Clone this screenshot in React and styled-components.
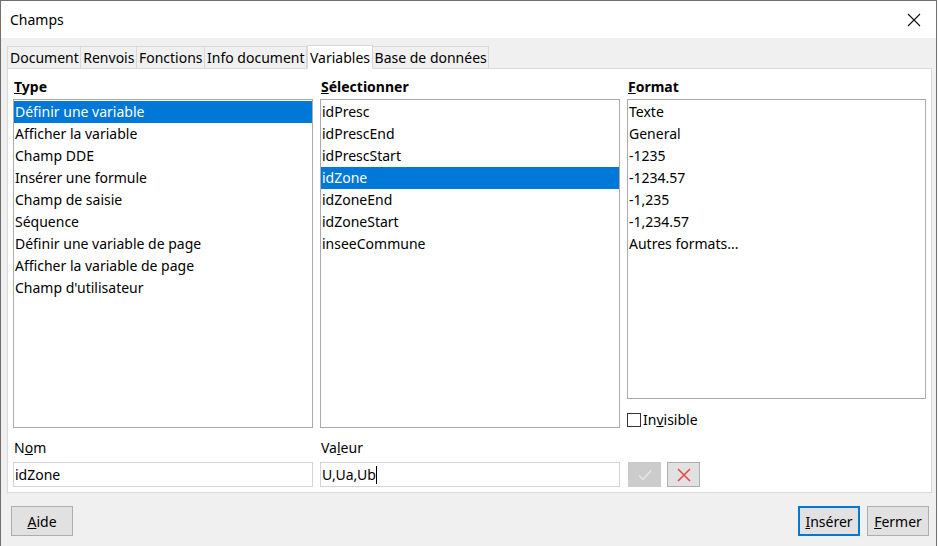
import React from "react";
import styled, { createGlobalStyle } from "styled-components";

const GlobalStyle = createGlobalStyle`
  html, body {
    margin: 0;
    padding: 0;
    width: 938px;
    height: 546px;
    overflow: hidden;
    background: #ffffff;
  }
  body {
    font-family: "Noto Sans", "Open Sans", sans-serif;
    font-size: 14px;
    color: #000;
  }
`;

const Window = styled.div`
  box-sizing: border-box;
  width: 937px;
  height: 546px;
  border: 1px solid #6f6f6f;
  border-bottom: none;
  display: flex;
  flex-direction: column;
  background: #f0f0f0;
`;

const TitleBar = styled.div`
  height: 37px;
  background: #fff;
  display: flex;
  align-items: center;
  justify-content: space-between;
  padding: 0 14px 0 9px;
  font-size: 14px;
`;

const CloseBtn = styled.div`
  width: 16px;
  height: 16px;
  display: flex;
  align-items: center;
  justify-content: center;
`;

const Body = styled.div`
  flex: 1;
  display: flex;
  flex-direction: column;
  padding: 6px 5px 0 6px;
`;

const TabRow = styled.div`
  display: flex;
  align-items: flex-end;
  height: 24px;
`;

const Tab = styled.div`
  box-sizing: border-box;
  height: ${(p) => (p.$active ? "24px" : "23px")};
  padding: 0 1.5px 0 2px;
  display: flex;
  align-items: center;
  background: ${(p) => (p.$active ? "#fff" : "#f0f0f0")};
  border: 1px solid #d9d9d9;
  border-bottom: ${(p) => (p.$active ? "1px solid #fff" : "1px solid #d9d9d9")};
  border-left: ${(p) => (p.$first || p.$active ? "1px solid #d9d9d9" : "none")};
  margin-bottom: -1px;
  position: relative;
  z-index: ${(p) => (p.$active ? 1 : 0)};
  white-space: nowrap;
`;

const Panel = styled.div`
  box-sizing: border-box;
  width: 925px;
  height: 425px;
  background: #fff;
  border: 1px solid #d9d9d9;
  padding: 9px 5px 5px 5px;
  display: flex;
  flex-direction: column;
`;

const Columns = styled.div`
  display: grid;
  grid-template-columns: 300px 300px 299px;
  column-gap: 7px;
`;

const Column = styled.div`
  display: flex;
  flex-direction: column;
`;

const Heading = styled.div`
  font-weight: bold;
  height: 21px;
  line-height: 18px;
  padding-left: 1px;
`;

const List = styled.div`
  box-sizing: border-box;
  height: ${(p) => p.$h}px;
  border: 1px solid #ababab;
  padding: 1px 0;
  background: #fff;
`;

const Item = styled.div`
  height: 22px;
  line-height: 22px;
  padding-left: 1px;
  background: ${(p) => (p.$selected ? "#0078d7" : "transparent")};
  color: ${(p) => (p.$selected ? "#fff" : "#000")};
  white-space: nowrap;
`;

const CheckRow = styled.label`
  display: flex;
  align-items: center;
  gap: 2px;
  margin-top: 12px;
  height: 17px;
`;

const CheckBox = styled.span`
  box-sizing: border-box;
  width: 14px;
  height: 14px;
  border: 1px solid #333;
  background: #fff;
`;

const Fields = styled.div`
  display: grid;
  grid-template-columns: 300px 300px 299px;
  column-gap: 7px;
  margin-top: 12px;
`;

const FieldLabel = styled.div`
  height: 22px;
  line-height: 16px;
  padding-left: 1px;
`;

const Input = styled.div`
  box-sizing: border-box;
  height: 25px;
  border: 1px solid #d4d4d4;
  padding-left: 1px;
  line-height: 23px;
  display: flex;
  align-items: center;
`;

const Caret = styled.span`
  display: inline-block;
  width: 1px;
  height: 18px;
  background: #000;
`;

const IconButtons = styled.div`
  display: flex;
  gap: 6px;
  padding-left: 1px;
  align-self: end;
`;

const IconButton = styled.div`
  box-sizing: border-box;
  width: ${(p) => p.$w}px;
  height: 25px;
  border: 1px solid ${(p) => (p.$disabled ? "#cccccc" : "#adadad")};
  background: ${(p) => (p.$disabled ? "#cccccc" : "#e1e1e1")};
  display: flex;
  align-items: center;
  justify-content: center;
`;

const Footer = styled.div`
  display: flex;
  justify-content: space-between;
  align-items: center;
  padding: 13px 2px 0 4px;
`;

const ButtonGroup = styled.div`
  display: flex;
  gap: 7px;
`;

const Button = styled.div`
  box-sizing: border-box;
  width: ${(p) => p.$w || 62}px;
  height: 30px;
  border: ${(p) => (p.$default ? "2px solid #0078d7" : "1px solid #adadad")};
  background: #e1e1e1;
  display: flex;
  align-items: center;
  justify-content: center;
`;

const types = [
  "Définir une variable",
  "Afficher la variable",
  "Champ DDE",
  "Insérer une formule",
  "Champ de saisie",
  "Séquence",
  "Définir une variable de page",
  "Afficher la variable de page",
  "Champ d'utilisateur",
];

const selections = [
  "idPresc",
  "idPrescEnd",
  "idPrescStart",
  "idZone",
  "idZoneEnd",
  "idZoneStart",
  "inseeCommune",
];

const formats = ["Texte", "General", "-1235", "-1234.57", "-1,235", "-1,234.57", "Autres formats..."];

const tabs = ["Document", "Renvois", "Fonctions", "Info document", "Variables", "Base de données"];

function Mn({ text, at }) {
  return (
    <>
      {text.slice(0, at)}
      <u>{text[at]}</u>
      {text.slice(at + 1)}
    </>
  );
}

export default function App() {
  return (
    <>
      <GlobalStyle />
      <Window>
        <TitleBar>
          <span>Champs</span>
          <CloseBtn>
            <svg width="14" height="14" viewBox="0 0 14 14">
              <path d="M1 1 L13 13 M13 1 L1 13" stroke="#111" strokeWidth="1.1" />
            </svg>
          </CloseBtn>
        </TitleBar>
        <Body>
          <TabRow>
            {tabs.map((t, i) => (
              <Tab key={t} $first={i === 0} $active={t === "Variables"}>
                {t}
              </Tab>
            ))}
          </TabRow>
          <Panel>
            <Columns>
              <Column>
                <Heading>
                  <Mn text="Type" at={0} />
                </Heading>
                <List $h={329}>
                  {types.map((t, i) => (
                    <Item key={t} $selected={i === 0}>
                      {t}
                    </Item>
                  ))}
                </List>
              </Column>
              <Column>
                <Heading>
                  <Mn text="Sélectionner" at={0} />
                </Heading>
                <List $h={329}>
                  {selections.map((t) => (
                    <Item key={t} $selected={t === "idZone"}>
                      {t}
                    </Item>
                  ))}
                </List>
              </Column>
              <Column>
                <Heading>
                  <Mn text="Format" at={0} />
                </Heading>
                <List $h={300}>
                  {formats.map((t) => (
                    <Item key={t}>{t}</Item>
                  ))}
                </List>
                <CheckRow>
                  <CheckBox />
                  <span>
                    <Mn text="Invisible" at={2} />
                  </span>
                </CheckRow>
              </Column>
            </Columns>
            <Fields>
              <Column>
                <FieldLabel>
                  <Mn text="Nom" at={1} />
                </FieldLabel>
                <Input>idZone</Input>
              </Column>
              <Column>
                <FieldLabel>
                  <Mn text="Valeur" at={2} />
                </FieldLabel>
                <Input>
                  U,Ua,Ub
                  <Caret />
                </Input>
              </Column>
              <IconButtons>
                <IconButton $w={33} $disabled>
                  <svg width="16" height="14" viewBox="0 0 16 14">
                    <path d="M2 7.5 L6 11.5 L14 2.5" stroke="#e8e8e8" strokeWidth="1.5" fill="none" />
                  </svg>
                </IconButton>
                <IconButton $w={33}>
                  <svg width="16" height="16" viewBox="0 0 16 16">
                    <path d="M2 2 L14 14 M14 2 L2 14" stroke="#e84a4a" strokeWidth="1.6" />
                  </svg>
                </IconButton>
              </IconButtons>
            </Fields>
          </Panel>
          <Footer>
            <Button>
              <Mn text="Aide" at={0} />
            </Button>
            <ButtonGroup>
              <Button $default>
                <Mn text="Insérer" at={0} />
              </Button>
              <Button>
                <Mn text="Fermer" at={0} />
              </Button>
            </ButtonGroup>
          </Footer>
        </Body>
      </Window>
    </>
  );
}
